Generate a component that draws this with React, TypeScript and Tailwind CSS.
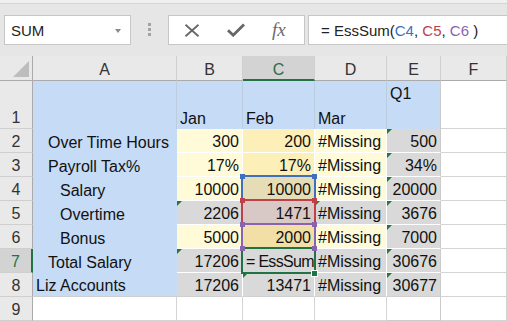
import React from "react";

type Cell = {
  t: string;
  bg: string;
  r?: boolean;
  tri?: boolean;
  extra?: string;
};

const Y = "bg-[#fffbd9]";
const G = "bg-[#fdefb8]";
const S = "bg-[#d9d9d9]";

const rows: { n: number; a: string; pad: string; cells: Cell[] }[] = [
  {
    n: 2,
    a: "Over Time Hours",
    pad: "pl-[15px]",
    cells: [
      { t: "300", bg: Y, r: true },
      { t: "200", bg: G, r: true },
      { t: "#Missing", bg: Y },
      { t: "500", bg: S, r: true, tri: true },
    ],
  },
  {
    n: 3,
    a: "Payroll Tax%",
    pad: "pl-[15px]",
    cells: [
      { t: "17%", bg: Y, r: true },
      { t: "17%", bg: G, r: true },
      { t: "#Missing", bg: Y },
      { t: "34%", bg: S, r: true, tri: true },
    ],
  },
  {
    n: 4,
    a: "Salary",
    pad: "pl-[27px]",
    cells: [
      { t: "10000", bg: Y, r: true },
      { t: "10000", bg: "bg-[#e6ddb6]", r: true },
      { t: "#Missing", bg: Y },
      { t: "20000", bg: S, r: true, tri: true },
    ],
  },
  {
    n: 5,
    a: "Overtime",
    pad: "pl-[27px]",
    cells: [
      { t: "2206", bg: S, r: true, tri: true },
      { t: "1471", bg: "bg-[#d9c9c6]", r: true },
      { t: "#Missing", bg: S, tri: true },
      { t: "3676", bg: S, r: true, tri: true },
    ],
  },
  {
    n: 6,
    a: "Bonus",
    pad: "pl-[27px]",
    cells: [
      { t: "5000", bg: Y, r: true },
      { t: "2000", bg: "bg-[#f1dfa6]", r: true },
      { t: "#Missing", bg: Y },
      { t: "7000", bg: S, r: true, tri: true },
    ],
  },
  {
    n: 7,
    a: "Total Salary",
    pad: "pl-[15px]",
    cells: [
      { t: "17206", bg: S, r: true, tri: true },
      { t: "= EssSum", bg: S, extra: "tracking-[-0.7px]" },
      { t: "#Missing", bg: S },
      { t: "30676", bg: S, r: true, tri: true },
    ],
  },
  {
    n: 8,
    a: "Liz Accounts",
    pad: "pl-[3px]",
    cells: [
      { t: "17206", bg: S, r: true },
      { t: "13471", bg: S, r: true, tri: true },
      { t: "#Missing", bg: S },
      { t: "30677", bg: S, r: true, tri: true },
    ],
  },
];

function Tri() {
  return (
    <span className="absolute left-0 top-0 h-0 w-0 border-t-[5px] border-r-[5px] border-t-[#1e7b34] border-r-transparent" />
  );
}

function RowHead({ n, sel }: { n: number; sel?: boolean }) {
  return (
    <div
      className={
        sel
          ? "flex items-end justify-center pb-[1px] leading-[18px] bg-[#d3d3d3] border-r-2 border-r-[#217346] border-b border-b-[#cfcfcf] text-[#217346]"
          : "flex items-end justify-center pb-[1px] leading-[18px] bg-[#e9e9e9] border-r border-r-[#ababab] border-b border-b-[#cfcfcf] text-[#333]"
      }
    >
      {n}
    </div>
  );
}

function ColHead({ l, sel }: { l: string; sel?: boolean }) {
  return (
    <div
      className={
        sel
          ? "flex items-end justify-center pb-[0px] leading-[18px] bg-[#d3d3d3] border-r border-r-[#cfcfcf] border-b-2 border-b-[#217346] text-[#2f6a48]"
          : "flex items-end justify-center pb-[1px] leading-[18px] bg-[#e9e9e9] border-r border-r-[#cfcfcf] border-b border-b-[#ababab] text-[#333]"
      }
    >
      {l}
    </div>
  );
}

function DataCell({ c, last, bottom, lastRow }: { c: Cell; last: boolean; bottom: boolean; lastRow: boolean }) {
  const base =
    "relative flex items-end pb-[1px] leading-[18px] overflow-hidden whitespace-nowrap border-r border-b text-[#111]";
  const rc = last ? "border-r-[#cbcbcb]" : "border-r-white";
  const bc = lastRow ? "border-b-[#cfcfcf]" : "border-b-white";
  return (
    <div className={`${base} ${c.bg} ${rc} ${bc} ${c.r ? "justify-end pr-[3px]" : "justify-start pl-[3px]"} ${c.extra ?? ""}`}>
      {c.tri && <Tri />}
      <span>{c.t}</span>
    </div>
  );
}

export default function App() {
  return (
    <div className="w-[507px] h-[321px] overflow-hidden bg-white font-['Liberation_Sans',Arial,sans-serif] text-[16px]">
      {/* toolbar */}
      <div className="h-[56px] bg-[#e6e6e6] flex flex-col">
        <div className="h-[4px] bg-[#f0f0f0] border-b border-b-[#d6d6d6]" />
        <div className="flex items-start pt-[11px] pl-[4px]">
          <div className="w-[127px] h-[30px] bg-white border border-[#c6c6c6] flex items-start pt-[3px] pl-[6px] leading-[24px] text-[15px] text-[#222]">
            <span className="flex-1">SUM</span>
            <span className="mt-[10px] mr-[9px] h-0 w-0 border-l-[3px] border-r-[3px] border-t-[4px] border-l-transparent border-r-transparent border-t-[#8a8a8a]" />
          </div>
          <div className="w-[37px] flex flex-col items-center gap-[2px] pt-[8px]">
            <span className="w-[3px] h-[3px] bg-[#a3a3a3]" />
            <span className="w-[3px] h-[3px] bg-[#a3a3a3]" />
            <span className="w-[3px] h-[3px] bg-[#a3a3a3]" />
          </div>
          <div className="w-[137px] h-[30px] bg-white border border-[#c6c6c6] flex items-center pl-[15px] gap-[27px]">
            <svg width="16" height="13" viewBox="0 0 16 13">
              <path d="M1.5 0.8 L14.5 12.2 M14.5 0.8 L1.5 12.2" stroke="#676767" strokeWidth="1.8" fill="none" />
            </svg>
            <svg width="18" height="14" viewBox="0 0 18 14">
              <path d="M1 7.2 L6.2 12.2 L17 1.5" stroke="#676767" strokeWidth="2.8" fill="none" />
            </svg>
            <span className="font-['Liberation_Serif',serif] italic text-[19px] leading-[20px] text-[#6b6b6b]">fx</span>
          </div>
          <div className="ml-[3px] flex-1 -mr-[2px] h-[30px] bg-white border border-[#c6c6c6] flex items-start pt-[3px] pl-[12px] leading-[24px] text-[15px] text-[#222] whitespace-nowrap">
            <span>= EssSum(</span>
            <span className="text-[#3e6fc1]">C4</span>
            <span>,&nbsp;</span>
            <span className="text-[#c0404a]">C5</span>
            <span>,&nbsp;</span>
            <span className="text-[#8a63b0]">C6</span>
            <span>&nbsp;)</span>
          </div>
        </div>
      </div>

      {/* grid */}
      <div className="relative grid grid-cols-[33px_144px_66px_72px_72px_54px_1fr] grid-rows-[25px_48px_repeat(8,24px)]">
        {/* header row */}
        <div className="relative bg-[#e9e9e9] border-r border-b border-[#ababab]">
          <span className="absolute right-[3px] bottom-[3px] h-0 w-0 border-b-[16px] border-l-[16px] border-l-transparent border-b-[#bdbdbd]" />
        </div>
        <ColHead l="A" />
        <ColHead l="B" />
        <ColHead l="C" sel />
        <ColHead l="D" />
        <ColHead l="E" />
        <ColHead l="F" />

        {/* row 1 */}
        <RowHead n={1} />
        <div className="bg-[#c6dbf5] border-r border-r-[#bccde2]" />
        <div className="flex items-end pb-[1px] pl-[3px] leading-[18px] bg-[#c6dbf5] border-r border-r-[#bccde2] text-[#111]">Jan</div>
        <div className="flex items-end pb-[1px] pl-[3px] leading-[18px] bg-[#c6dbf5] border-r border-r-[#bccde2] text-[#111]">Feb</div>
        <div className="flex items-end pb-[1px] pl-[3px] leading-[18px] bg-[#c6dbf5] border-r border-r-[#bccde2] text-[#111]">Mar</div>
        <div className="flex items-start pt-[4px] pl-[3px] leading-[18px] bg-[#c6dbf5] border-r border-r-[#cbcbcb] text-[#111]">Q1</div>
        <div className="bg-white border-r border-b border-[#d4d4d4]" />

        {rows.map((row, ri) => (
          <React.Fragment key={row.n}>
            <RowHead n={row.n} sel={row.n === 7} />
            <div
              className={`flex items-end pb-[1px] leading-[18px] whitespace-nowrap bg-[#c6dbf5] text-[#111] ${row.pad} ${
                ri === rows.length - 1 ? "border-b border-b-[#cfcfcf]" : ""
              }`}
            >
              {row.a}
            </div>
            {row.cells.map((c, ci) => (
              <DataCell key={ci} c={c} last={ci === 3} bottom={false} lastRow={ri === rows.length - 1} />
            ))}
            <div className="bg-white border-r border-b border-[#d4d4d4]" />
          </React.Fragment>
        ))}

        {/* row 9 */}
        <RowHead n={9} />
        <div className="bg-white border-r border-b border-[#d4d4d4]" />
        <div className="bg-white border-r border-b border-[#d4d4d4]" />
        <div className="bg-white border-r border-b border-[#d4d4d4]" />
        <div className="bg-white border-r border-b border-[#d4d4d4]" />
        <div className="bg-white border-r border-b border-[#cbcbcb]" />
        <div className="bg-white border-r border-b border-[#d4d4d4]" />

        {/* selection overlays */}
        <div className="pointer-events-none absolute left-[241px] top-[119px] w-[75px] h-[26px] border-t-2 border-l-2 border-r-2 border-[#3e6fc1]" />
        <div className="pointer-events-none absolute left-[241px] top-[143px] w-[75px] h-[26px] border-t-2 border-l-2 border-r-2 border-[#c0404a]" />
        <div className="pointer-events-none absolute left-[241px] top-[167px] w-[75px] h-[26px] border-2 border-[#8a63b0]" />
        <div className="pointer-events-none absolute left-[241px] top-[191px] w-[75px] h-[27px] border-2 border-[#217346]" />

        <span className="absolute left-[240px] top-[118px] w-[5px] h-[5px] bg-[#3e6fc1]" />
        <span className="absolute left-[312px] top-[118px] w-[5px] h-[5px] bg-[#3e6fc1]" />
        <span className="absolute left-[240px] top-[142px] w-[5px] h-[5px] bg-[#c0404a]" />
        <span className="absolute left-[312px] top-[142px] w-[5px] h-[5px] bg-[#c0404a]" />
        <span className="absolute left-[240px] top-[166px] w-[5px] h-[5px] bg-[#8a63b0]" />
        <span className="absolute left-[312px] top-[166px] w-[5px] h-[5px] bg-[#8a63b0]" />
        <span className="absolute left-[240px] top-[190px] w-[5px] h-[5px] bg-[#8a63b0]" />
        <span className="absolute left-[312px] top-[190px] w-[5px] h-[5px] bg-[#8a63b0]" />
        <span className="absolute left-[311px] top-[214px] w-[7px] h-[7px] bg-[#217346] border border-white" />
      </div>
    </div>
  );
}
